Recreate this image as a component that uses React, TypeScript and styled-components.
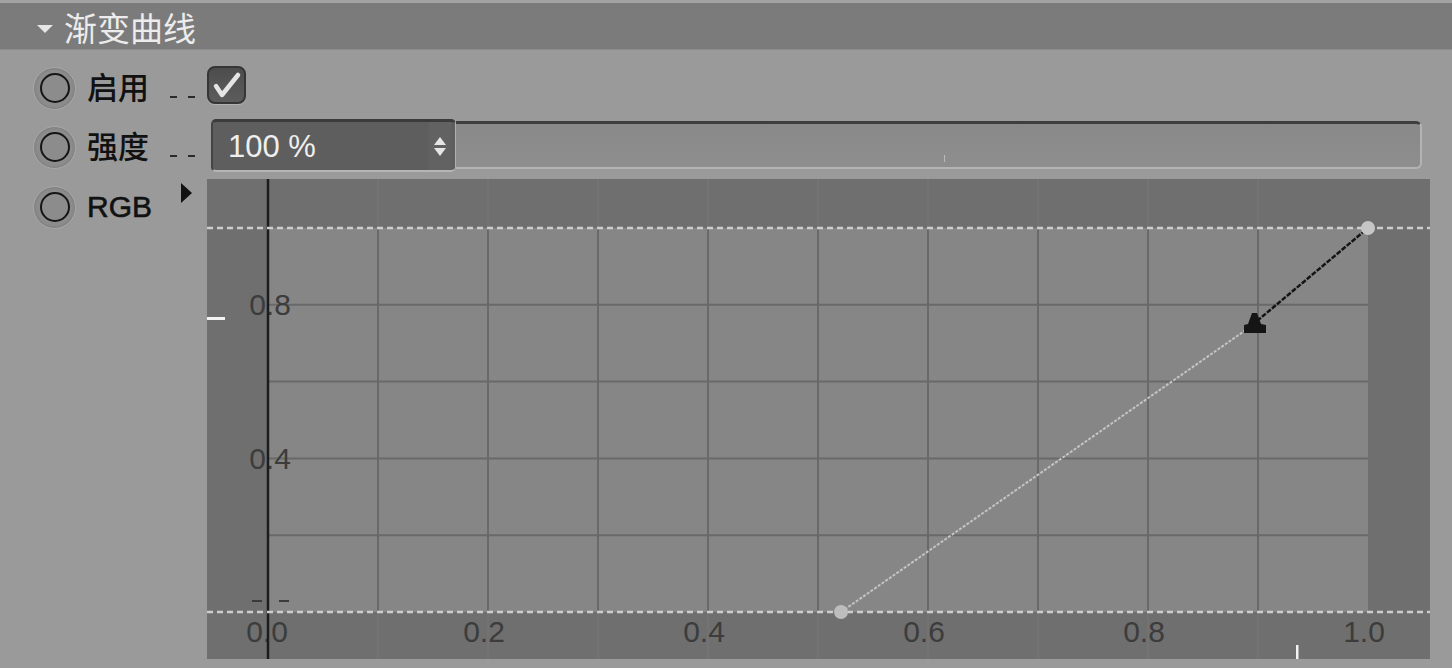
import React from "react";
import styled, { createGlobalStyle } from "styled-components";

const GlobalStyle = createGlobalStyle`
  html, body { margin: 0; padding: 0; background: #9a9a9a; }
  body {
    width: 1452px; height: 668px; overflow: hidden;
    font-family: "Liberation Sans", "Noto Sans CJK SC", sans-serif;
  }
`;

const Panel = styled.div`
  width: 1452px;
  height: 668px;
  box-sizing: border-box;
  display: flex;
  flex-direction: column;
  background: #9a9a9a;
  border-top: 3px solid #a3a3a3;
`;

const Header = styled.div`
  height: 47px;
  flex: none;
  display: flex;
  align-items: center;
  padding: 3px 0 0 37px;
  box-sizing: border-box;
  background: #7b7b7b;
  border-bottom: 1px solid #8c8c8c;
`;

const Caret = styled.span`
  width: 0;
  height: 0;
  border-left: 8px solid transparent;
  border-right: 8px solid transparent;
  border-top: 8px solid #e6e6e6;
  margin-top: 2px;
`;

const Title = styled.span`
  margin-left: 11px;
  font-family: "Noto Sans CJK SC", sans-serif;
  font-size: 33px;
  font-weight: 400;
  color: #ececec;
  line-height: 1;
`;

const Body = styled.div`
  display: flex;
  flex-direction: column;
  padding-top: 7px;
`;

const Row = styled.div<{ $h: number }>`
  display: grid;
  grid-template-columns: 207px 1fr;
  min-height: ${(p) => p.$h}px;
`;

const LabelCell = styled.div<{ $h?: number }>`
  display: flex;
  align-items: center;
  padding-left: 33px;
  height: ${(p) => (p.$h ? `${p.$h}px` : "auto")};
`;

const Radio = styled.span`
  width: 43px;
  height: 43px;
  flex: none;
  box-sizing: border-box;
  border-radius: 50%;
  background: #8c8c8c;
  border: 1.5px solid #a8a8a8;
  box-shadow: inset 0 0 3px rgba(0, 0, 0, 0.2);
  display: flex;
  align-items: center;
  justify-content: center;
  &::after {
    content: "";
    width: 30px;
    height: 30px;
    box-sizing: border-box;
    border-radius: 50%;
    border: 2.5px solid #151515;
  }
`;

const Name = styled.span<{ $latin?: boolean }>`
  margin-left: 11px;
  margin-top: ${(p) => (p.$latin ? 0 : -5)}px;
  width: 80px;
  flex: none;
  font-family: ${(p) =>
    p.$latin ? `"Liberation Sans", sans-serif` : `"Noto Sans CJK SC", sans-serif`};
  font-size: ${(p) => (p.$latin ? 30 : 31)}px;
  font-weight: ${(p) => (p.$latin ? 400 : 500)};
  color: #111;
  line-height: 1;
  ${(p) => (p.$latin ? "-webkit-text-stroke: 0.6px #111;" : "")}
`;

const Leader = styled.span`
  display: flex;
  gap: 11px;
  margin: 18px 0 0 3px;
`;

const Dash = styled.span`
  width: 7px;
  height: 2px;
  background: #2a2a2a;
`;

const ExpandArrow = styled.span`
  width: 0;
  height: 0;
  margin: -28px 0 0 14px;
  border-top: 10px solid transparent;
  border-bottom: 10px solid transparent;
  border-left: 11px solid #111;
`;

const Content = styled.div`
  display: flex;
  align-items: flex-start;
`;

const CheckBox = styled.span`
  margin-top: 9px;
  width: 39px;
  height: 38px;
  box-sizing: border-box;
  border-radius: 8px;
  border: 2px solid #363636;
  background: linear-gradient(#4d4d4d, #5c5c5c);
  box-shadow: 0 1px 0 #b2b2b2;
  display: flex;
  align-items: center;
  justify-content: center;
`;

const NumberField = styled.div`
  margin-left: 4px;
  width: 245px;
  height: 53px;
  box-sizing: border-box;
  display: flex;
  align-items: center;
  padding: 0 4px 0 15px;
  background: #5e5e5e;
  border-top: 3px solid #3b3b3b;
  border-left: 2px solid #444;
  border-bottom: 2px solid #b5b5b5;
  border-right: 1px solid #b0b0b0;
  border-radius: 5px;
`;

const FieldText = styled.span`
  flex: 1;
  font-family: "Liberation Sans", sans-serif;
  font-size: 31px;
  color: #efefef;
  line-height: 1;
`;

const Spinner = styled.span`
  width: 22px;
  align-self: stretch;
  display: flex;
  flex-direction: column;
  align-items: center;
  justify-content: center;
  gap: 3px;
  background: #626262;
`;

const SpinArrow = styled.span<{ $up?: boolean }>`
  width: 0;
  height: 0;
  border-left: 6px solid transparent;
  border-right: 6px solid transparent;
  ${(p) =>
    p.$up
      ? "border-bottom: 8px solid #e6e6e6;"
      : "border-top: 8px solid #e6e6e6;"}
`;

const SliderTrack = styled.div`
  margin-top: 2px;
  width: 966px;
  height: 48px;
  box-sizing: border-box;
  position: relative;
  background: linear-gradient(#898989, #8e8e8e);
  border-top: 3px solid #3e3e3e;
  border-bottom: 2px solid #b4b4b4;
  border-right: 2px solid #b4b4b4;
  border-radius: 0 6px 6px 0;
`;

const SliderTick = styled.span`
  position: absolute;
  left: 488px;
  bottom: 5px;
  width: 1px;
  height: 7px;
  background: #b9b9b9;
`;

const ChartBox = styled.div`
  margin-top: 4px;
  width: 1223px;
  height: 480px;
  background: #707070;
  svg { display: block; }
`;

const X0 = 61;
const X1 = 1161;
const Y0 = 433;
const Y1 = 49;

const Chart: React.FC = () => {
  const vlines = Array.from({ length: 9 }, (_, i) => X0 + 110 * (i + 1));
  const hlines = Array.from({ length: 4 }, (_, i) => Y0 - 76.8 * (i + 1));
  const bottomLabels = ["0.0", "0.2", "0.4", "0.6", "0.8", "1.0"];
  return (
    <svg width="1223" height="480" viewBox="0 0 1223 480">
      <rect x="0" y="0" width="1223" height="480" fill="#6f6f6f" />
      {vlines.map((x) => (
        <line key={`f${x}`} x1={x} y1={0} x2={x} y2={480} stroke="#737373" strokeWidth="2" />
      ))}
      <rect x={X0} y={Y1} width={X1 - X0} height={Y0 - Y1} fill="#868686" />
      {vlines.map((x) => (
        <line key={`v${x}`} x1={x} y1={Y1} x2={x} y2={Y0} stroke="#696969" strokeWidth="2" />
      ))}
      {hlines.map((y) => (
        <line key={`h${y}`} x1={X0} y1={y} x2={X1} y2={y} stroke="#696969" strokeWidth="2" />
      ))}
      <g fontFamily="Liberation Sans, sans-serif" fontSize="30" fill="#3c3c3c" textAnchor="middle">
        <text x="63" y="136">0.8</text>
        <text x="63" y="290">0.4</text>
        {bottomLabels.map((t, i) => (
          <text key={t} x={i === 0 ? 60 : X0 + 220 * i - 4} y="463">{t}</text>
        ))}
      </g>
      <line x1={X0} y1="0" x2={X0} y2="480" stroke="#1c1c1c" strokeWidth="2.5" />
      <line x1="0" y1={Y1} x2="1223" y2={Y1} stroke="#cdcdcd" strokeWidth="2.5" strokeDasharray="6 4" />
      <line x1="0" y1={Y0} x2="1223" y2={Y0} stroke="#cdcdcd" strokeWidth="2.5" strokeDasharray="6 4" />
      <rect x="45" y="421" width="10" height="2" fill="#3a3a3a" />
      <rect x="72" y="421" width="10" height="2" fill="#3a3a3a" />
      <rect x="0" y="138" width="18" height="3" fill="#f2f2f2" />
      <rect x="1089" y="466" width="2.5" height="16" fill="#f2f2f2" />
      <line x1="634" y1="433" x2="1046" y2="146" stroke="#c4c4c4" strokeWidth="2" strokeDasharray="3 1.5" />
      <line x1="1050" y1="142" x2="1161" y2="49" stroke="#141414" strokeWidth="2.5" strokeDasharray="5 1.5" />
      <circle cx="634" cy="433" r="7" fill="#bdbdbd" />
      <circle cx="1161" cy="49" r="7" fill="#c6c6c6" />
      <polygon
        points="1045,134 1050,134 1054,145 1059,146 1059,154 1037,154 1037,146 1041,145"
        fill="#151515"
      />
    </svg>
  );
};

export default function App() {
  return (
    <>
      <GlobalStyle />
      <Panel>
        <Header>
          <Caret />
          <Title>渐变曲线</Title>
        </Header>
        <Body>
          <Row $h={62}>
            <LabelCell>
              <Radio />
              <Name>启用</Name>
              <Leader>
                <Dash />
                <Dash />
              </Leader>
            </LabelCell>
            <Content>
              <CheckBox>
                <svg width="30" height="28" viewBox="0 0 30 28">
                  <path
                    d="M4 15 L10 24 L26 4"
                    fill="none"
                    stroke="#e4e4e4"
                    strokeWidth="4.5"
                    strokeLinecap="round"
                    strokeLinejoin="round"
                  />
                </svg>
              </CheckBox>
            </Content>
          </Row>
          <Row $h={56}>
            <LabelCell>
              <Radio />
              <Name>强度</Name>
              <Leader>
                <Dash />
                <Dash />
              </Leader>
            </LabelCell>
            <Content>
              <NumberField>
                <FieldText>100 %</FieldText>
                <Spinner>
                  <SpinArrow $up />
                  <SpinArrow />
                </Spinner>
              </NumberField>
              <SliderTrack>
                <SliderTick />
              </SliderTrack>
            </Content>
          </Row>
          <Row $h={484}>
            <LabelCell $h={64}>
              <Radio />
              <Name $latin>RGB</Name>
              <ExpandArrow />
            </LabelCell>
            <Content>
              <ChartBox>
                <Chart />
              </ChartBox>
            </Content>
          </Row>
        </Body>
      </Panel>
    </>
  );
}
